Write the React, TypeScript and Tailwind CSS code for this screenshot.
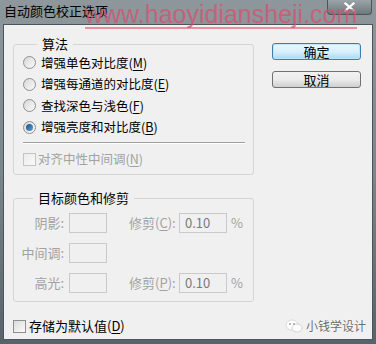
const font = { fontFamily: '"Microsoft YaHei", "Noto Sans CJK SC", sans-serif' };

function Radio({ checked }: { checked?: boolean }) {
  return (
    <span className="w-[13px] h-[13px] rounded-full border border-[#8f8f8f] bg-gradient-to-br from-[#d8d8d8] to-[#fafafa] flex items-center justify-center shrink-0">
      {checked && <span className="w-[7px] h-[7px] rounded-full bg-gradient-to-br from-[#1b4f82] to-[#5aa2e0]" />}
    </span>
  );
}

function Check({ disabled }: { disabled?: boolean }) {
  return (
    <span
      className={
        "w-[13px] h-[13px] border shrink-0 bg-gradient-to-br " +
        (disabled ? "border-[#c4c4c4] from-[#ececec] to-[#f8f8f8]" : "border-[#8f8f8f] from-[#dcdcdc] to-[#fbfbfb]")
      }
    />
  );
}

function Field({ value, wide }: { value?: string; wide?: boolean }) {
  return (
    <span
      className={
        "h-[20px] border border-[#c9c9c9] bg-[#f0f0f0] flex items-center pl-[5px] text-[13px] text-[#7a7a7a] " +
        (wide ? "w-[48px]" : "w-[38px]")
      }
    >
      {value}
    </span>
  );
}

export default function App() {
  const radios = [
    ["增强单色对比度(", "M", ")"],
    ["增强每通道的对比度(", "E", ")"],
    ["查找深色与浅色(", "F", ")"],
    ["增强亮度和对比度(", "B", ")"],
  ];

  return (
    <div
      className="w-[376px] h-[344px] relative overflow-hidden flex flex-col bg-gradient-to-b from-[#8d979c] via-[#7b868b] to-[#56636a]"
      style={font}
    >
      {/* title bar */}
      <div className="h-[24px] flex items-start justify-between pl-[4px] pr-[4px]">
        <span className="text-[13px] leading-[16px] mt-[3px] text-black">自动颜色校正选项</span>
        <div className="w-[45px] h-[15px] border border-t-0 border-[#4b555a] rounded-b-[4px] bg-gradient-to-b from-[#9aa3a8] to-[#6e797e] flex items-center justify-center">
          <svg width="11" height="10" viewBox="0 0 11 10">
            <path d="M1.5 1.5 L9.5 8.5 M9.5 1.5 L1.5 8.5" stroke="#fff" strokeWidth="2.2" strokeLinecap="square" />
          </svg>
        </div>
      </div>

      {/* client area */}
      <div className="flex-1 mx-[3px] mb-[4px] bg-[#f0f0f0] border border-[#4a575c] flex text-[13px] text-black">
        <div className="w-[241px] ml-[9px] mt-[11px] flex flex-col">
          <fieldset className="border border-[#d5d5d5] rounded-[3px] pl-[9px] pr-[8px] pb-[4px]">
            <legend className="ml-[14px] px-[5px] text-[13px] leading-[16px]">算法</legend>
            <div className="flex flex-col text-[12.5px]">
              {radios.map((r, i) => (
                <div key={i} className="h-[21.5px] flex items-center gap-[5px]">
                  <Radio checked={i === 3} />
                  <span className="leading-[16px]">
                    {r[0]}
                    <span className="underline underline-offset-2">{r[1]}</span>
                    {r[2]}
                  </span>
                </div>
              ))}
            </div>
            <div className="mt-[4px] border-t border-[#a0a0a0] border-b border-b-white" />
            <div className="h-[22px] mt-[4px] flex items-center gap-[2px] text-[12.5px] text-[#a2a2a2]">
              <Check disabled />
              <span className="leading-[16px]">
                对齐中性中间调(<span className="underline underline-offset-2">N</span>)
              </span>
            </div>
          </fieldset>

          <fieldset className="mt-[15px] border border-[#d5d5d5] rounded-[3px] pb-[8px] text-[#a2a2a2]">
            <legend className="ml-[19px] px-[5px] text-[13px] leading-[16px] text-black">目标颜色和修剪</legend>
            <div className="flex flex-col gap-[10px] mt-[7px]">
              <div className="h-[20px] flex items-center">
                <span className="w-[50px] text-right">阴影:</span>
                <span className="ml-[5px]"><Field /></span>
                <span className="ml-[22px] w-[50px]">
                  修剪(<span className="underline underline-offset-2">C</span>):
                </span>
                <Field value="0.10" wide />
                <span className="ml-[4px]">%</span>
              </div>
              <div className="h-[20px] flex items-center">
                <span className="w-[50px] text-right">中间调:</span>
                <span className="ml-[5px]"><Field /></span>
              </div>
              <div className="h-[20px] flex items-center">
                <span className="w-[50px] text-right">高光:</span>
                <span className="ml-[5px]"><Field /></span>
                <span className="ml-[22px] w-[50px]">
                  修剪(<span className="underline underline-offset-2">P</span>):
                </span>
                <Field value="0.10" wide />
                <span className="ml-[4px]">%</span>
              </div>
            </div>
          </fieldset>

          <div className="mt-[16px] flex items-center gap-[3px]">
            <Check />
            <span className="leading-[16px]">
              存储为默认值(<span className="underline underline-offset-2">D</span>)
            </span>
          </div>
        </div>

        <div className="ml-[18px] mt-[18px] flex flex-col gap-[11px]">
          <button className="w-[89px] h-[17px] rounded-[3px] border border-[#3c7fb1] bg-gradient-to-b from-[#eaf6fd] via-[#d9f0fc] to-[#a7d9f5] shadow-[inset_0_0_0_1px_#c0e4fa] text-[13px] leading-[15px] text-black">
            确定
          </button>
          <button className="w-[89px] h-[17px] rounded-[3px] border border-[#707070] bg-gradient-to-b from-[#f2f2f2] via-[#ebebeb] to-[#cfcfcf] text-[13px] leading-[15px] text-black">
            取消
          </button>
        </div>
      </div>

      {/* watermark, top */}
      <div className="absolute left-[85px] top-[2px] pointer-events-none">
        <span
          className="block whitespace-nowrap text-[25px] leading-[25px] text-[#d9506e]/75 border-b-2 border-[#ea8ea0]"
          style={{ fontFamily: '"Liberation Sans", Arial, sans-serif' }}
        >
          www.haoyidiansheji.com
        </span>
      </div>

      {/* watermark, bottom right */}
      <div className="absolute right-[10px] bottom-[11px] flex items-center gap-[3px] pointer-events-none">
        <svg width="18" height="14" viewBox="0 0 18 14">
          <ellipse cx="7" cy="6" rx="6" ry="5" fill="#fff" stroke="#d0d0d0" strokeWidth="0.8" />
          <ellipse cx="12" cy="9" rx="5" ry="4" fill="#fff" stroke="#c8c8c8" strokeWidth="0.8" />
          <circle cx="5" cy="5" r="0.9" fill="#9a9a9a" />
          <circle cx="9" cy="5" r="0.9" fill="#9a9a9a" />
        </svg>
        <span className="text-[12px] leading-[14px] text-[#6e6e6e] [text-shadow:0_0_2px_#fff]">小钱学设计</span>
      </div>
    </div>
  );
}
